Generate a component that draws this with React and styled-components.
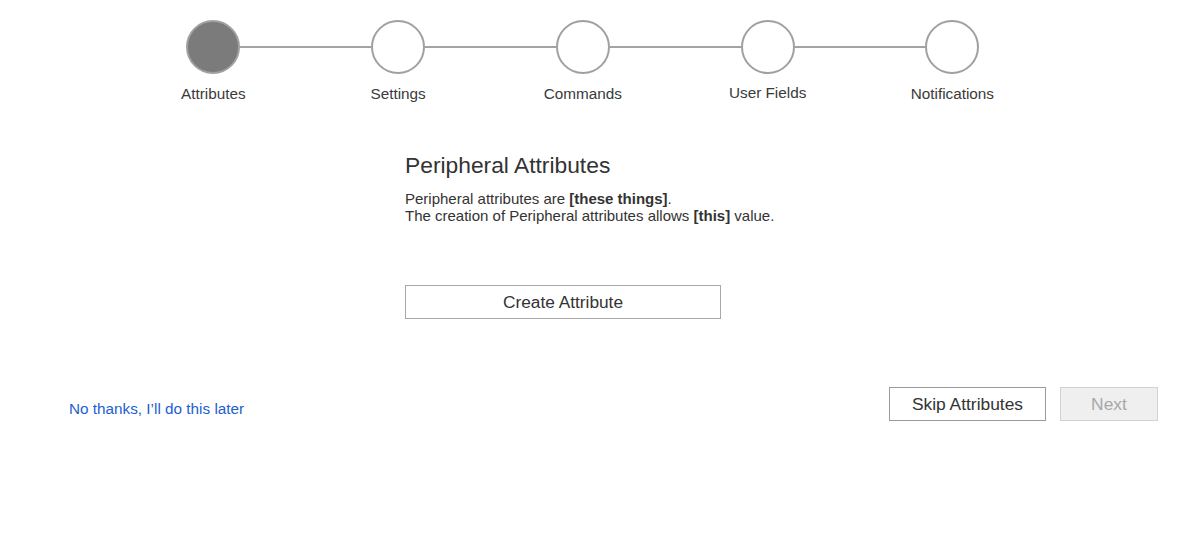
import React from "react";
import styled, { createGlobalStyle } from "styled-components";

const steps = ["Attributes", "Settings", "Commands", "User Fields", "Notifications"];

export default function App() {
  return (
    <>
      <GlobalStyle />
      <Page>
        <Stepper>
          {steps.map((label, idx) => (
            <Step key={label}>
              <Track>
                <HalfLine $hidden={idx === 0} />
                <Circle $active={idx === 0} />
                <HalfLine $hidden={idx === steps.length - 1} />
              </Track>
              <StepLabel $raised={label === "User Fields"}>{label}</StepLabel>
            </Step>
          ))}
        </Stepper>

        <Content>
          <Title>Peripheral Attributes</Title>
          <Body>
            Peripheral attributes are <b>[these things]</b>.
            <br />
            The creation of Peripheral attributes allows <b>[this]</b> value.
          </Body>
          <CreateButton>Create Attribute</CreateButton>
        </Content>

        <Footer>
          <LaterLink href="#">No thanks, I’ll do this later</LaterLink>
          <Actions>
            <SkipButton>Skip Attributes</SkipButton>
            <NextButton disabled>Next</NextButton>
          </Actions>
        </Footer>
      </Page>
    </>
  );
}

const GlobalStyle = createGlobalStyle`
  html, body {
    margin: 0;
    padding: 0;
    background: #fff;
  }
  body {
    font-family: "Liberation Sans", Arial, sans-serif;
    color: #333;
    -webkit-font-smoothing: antialiased;
  }
`;

const Page = styled.div`
  width: 1200px;
  height: 550px;
  box-sizing: border-box;
  padding-top: 20px;
  overflow: hidden;
`;

const Stepper = styled.ol`
  display: flex;
  margin: 0;
  padding: 0 0 0 121px;
  list-style: none;
`;

const Step = styled.li`
  display: flex;
  flex-direction: column;
  align-items: center;
  width: 184.75px;
`;

const Track = styled.div`
  display: flex;
  align-items: center;
  width: 100%;
`;

const HalfLine = styled.span`
  flex: 1;
  height: 2px;
  background: ${(p) => (p.$hidden ? "transparent" : "#a3a3a3")};
`;

const Circle = styled.span`
  flex: none;
  width: 50px;
  height: 50px;
  border-radius: 50%;
  border: 2px solid #a0a0a0;
  background: ${(p) => (p.$active ? "#7b7b7b" : "#fff")};
`;

const StepLabel = styled.span`
  margin-top: ${(p) => (p.$raised ? "10px" : "11px")};
  font-size: 15.3px;
  line-height: 18px;
  color: #3a3a3a;
  white-space: nowrap;
`;

const Content = styled.section`
  display: flex;
  flex-direction: column;
  align-items: flex-start;
  margin: 49px 0 0 405px;
`;

const Title = styled.h1`
  margin: 0;
  font-size: 22.8px;
  line-height: 26px;
  font-weight: 400;
  color: #333;
`;

const Body = styled.p`
  margin: 12px 0 0;
  font-size: 15px;
  line-height: 17px;
  color: #333;

  b {
    font-weight: 700;
  }
`;

const CreateButton = styled.button`
  margin-top: 61px;
  width: 316px;
  height: 34px;
  box-sizing: border-box;
  border: 1.5px solid #a8a8a8;
  background: #fff;
  font-family: inherit;
  font-size: 17.3px;
  color: #333;
  padding: 0;
`;

const Footer = styled.footer`
  display: flex;
  align-items: center;
  justify-content: space-between;
  margin-top: 68px;
  padding: 0 42px 0 69px;
`;

const LaterLink = styled.a`
  margin-top: 10px;
  font-size: 15.3px;
  color: #1c5fd1;
  text-decoration: none;
`;

const Actions = styled.div`
  display: flex;
  gap: 14px;
`;

const FooterButton = styled.button`
  height: 34px;
  box-sizing: border-box;
  font-family: inherit;
  font-size: 17.4px;
  padding: 0;
`;

const SkipButton = styled(FooterButton)`
  width: 157px;
  border: 1.5px solid #9a9a9a;
  background: #fff;
  color: #333;
`;

const NextButton = styled(FooterButton)`
  width: 98px;
  border: 1.5px solid #d2d2d2;
  background: #efefef;
  color: #a8a8a8;
`;
